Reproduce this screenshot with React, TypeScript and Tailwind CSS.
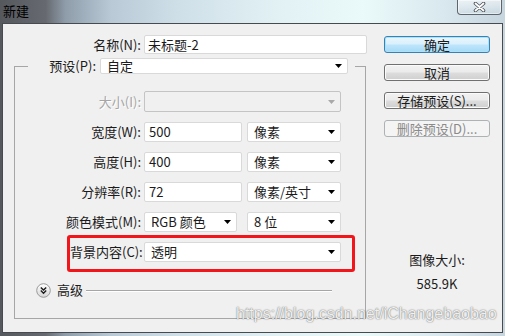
import React from 'react'

// Win7 风格「新建」对话框
function Arrow({ disabled }: { disabled?: boolean }) {
  return (
    <svg width="7" height="4" viewBox="0 0 7 4" className="flex-shrink-0">
      <path d="M0 0h7L3.5 4z" fill={disabled ? '#a8a8a8' : '#000'} />
    </svg>
  )
}

function Select({ value, className, disabled }: { value?: string; className: string; disabled?: boolean }) {
  return (
    <div
      className={`flex items-center justify-between rounded-[2px] border pl-[6px] pr-[5px] ${
        disabled ? 'border-[#c4c4c4] bg-[#f0f0f0]' : 'border-[#d9d9d9] bg-white'
      } ${className}`}
    >
      <span className="whitespace-nowrap">{value}</span>
      <Arrow disabled={disabled} />
    </div>
  )
}

function Input({ value, className }: { value: string; className: string }) {
  return (
    <div className={`flex items-center rounded-[2px] border border-[#d9d9d9] bg-white pl-[4px] ${className}`}>
      {value}
    </div>
  )
}

function Btn({ label, kind = 'normal' }: { label: string; kind?: 'normal' | 'default' | 'disabled' }) {
  const cls =
    kind === 'default'
      ? 'border-[#3c7fb1] bg-[linear-gradient(180deg,#eaf6fd_0%,#d9f0fc_48%,#bee6fd_52%,#a7d9f5_100%)] shadow-[inset_0_0_0_1px_#a6e4fb]'
      : kind === 'disabled'
      ? 'border-[#adb2b5] bg-[#f4f4f4] text-[#8a8a8a]'
      : 'border-[#707070] bg-[linear-gradient(180deg,#f2f2f2_0%,#ebebeb_48%,#dddddd_52%,#cfcfcf_100%)] shadow-[inset_0_0_0_1px_#fbfbfb]'
  return (
    <div className={`flex h-[17px] w-[106px] items-center justify-center rounded-[3px] border leading-[15px] ${cls}`}>
      {label}
    </div>
  )
}

function CloseButton() {
  return (
    <div className="mr-[3px] flex h-[15px] w-[45px] items-center justify-center rounded-b-[4px] border border-t-0 border-[#5f656d] bg-[linear-gradient(180deg,rgba(255,255,255,0.55)_0%,rgba(235,242,246,0.45)_50%,rgba(200,214,222,0.5)_100%)] shadow-[inset_0_0_0_1px_rgba(255,255,255,0.5)]">
      <svg width="13" height="10" viewBox="0 0 13 10">
        <path d="M2.5 1.5l8 7M10.5 1.5l-8 7" stroke="#50555c" strokeWidth="3.6" strokeLinecap="round" />
        <path d="M2.5 1.5l8 7M10.5 1.5l-8 7" stroke="#ffffff" strokeWidth="1.8" strokeLinecap="round" />
      </svg>
    </div>
  )
}

function AdvancedIcon() {
  return (
    <svg width="15" height="15" viewBox="0 0 15 15" className="flex-shrink-0">
      <defs>
        <linearGradient id="adv" x1="0" y1="0" x2="0" y2="1">
          <stop offset="0" stopColor="#ffffff" />
          <stop offset="1" stopColor="#d6d6d6" />
        </linearGradient>
      </defs>
      <circle cx="7.5" cy="7.5" r="6.8" fill="url(#adv)" stroke="#9a9a9a" />
      <path d="M4.8 4.4l2.7 2.6 2.7-2.6M4.8 7.6l2.7 2.6 2.7-2.6" fill="none" stroke="#1a1a1a" strokeWidth="1.4" />
    </svg>
  )
}

function Row({ label, children, dim }: { label: string; children: React.ReactNode; dim?: boolean }) {
  return (
    <div className="flex items-center">
      <span className={`w-[113px] whitespace-nowrap text-right ${dim ? 'text-[#a6a6a6] [text-shadow:1px_1px_0_#ffffff]' : ''}`}>
        {label}
      </span>
      <div className="ml-[3px] flex gap-[5px]">{children}</div>
    </div>
  )
}

export default function App() {
  return (
    <div className="relative h-[336px] w-[505px] overflow-hidden bg-[linear-gradient(90deg,#55585d_0%,#66696f_9%,#8f9dab_13%,#b9c9d6_22%,#cfdfe8_35%,#e2f1f4_55%,#eafafa_72%,#d9e8ee_88%,#c6d5de_100%)] font-['Noto_Sans_CJK_SC',sans-serif] text-[13px] leading-[16px] text-[#1b1b1b]">
      {/* 标题栏 */}
      <div className="flex h-[23px] items-start justify-between">
        <span className="pl-[3px] pt-[3px] text-black">新建</span>
        <CloseButton />
      </div>

      {/* 客户区 */}
      <div className="mx-[2px] flex h-[310px] border border-[#474a4f] bg-[#f0f0f0]">
        {/* 左栏 */}
        <div className="ml-[11px] mt-[11px] flex w-[353px] flex-col">
          <div className="flex h-[19px] items-center">
            <span className="w-[127px] text-right">名称(N):</span>
            <div className="ml-[3px] flex h-[19px] w-[223px] items-center rounded-[2px] border border-[#d9d9d9] bg-white pl-[3px]">
              未标题-2
            </div>
          </div>

          <fieldset className="mt-[4px] w-[352px] border border-[#a6a6a6] pb-[21px] pl-[13px]">
            <legend>
              <div className="flex h-[16px] items-center">
                <span className="w-[68px] text-right">预设(P):</span>
                <Select value="自定" className="ml-[4px] h-[16px] w-[248px]" />
                <span className="w-[7px]" />
              </div>
            </legend>

            <div className="mt-[17px] flex flex-col">
              <Row label="大小(I):" dim>
                <Select className="h-[21px] w-[197px]" disabled />
              </Row>
              <div className="mt-[10px]">
                <Row label="宽度(W):">
                  <Input value="500" className="h-[20px] w-[98px]" />
                  <Select value="像素" className="h-[20px] w-[94px]" />
                </Row>
              </div>
              <div className="mt-[10px]">
                <Row label="高度(H):">
                  <Input value="400" className="h-[20px] w-[98px]" />
                  <Select value="像素" className="h-[20px] w-[94px]" />
                </Row>
              </div>
              <div className="mt-[10px]">
                <Row label="分辨率(R):">
                  <Input value="72" className="h-[20px] w-[98px]" />
                  <Select value="像素/英寸" className="h-[20px] w-[94px]" />
                </Row>
              </div>
              <div className="mt-[10px]">
                <div className="flex items-center">
                  <span className="w-[113px] whitespace-nowrap text-right">颜色模式(M):</span>
                  <Select value="RGB 颜色" className="ml-[3px] h-[20px] w-[93px]" />
                  <Select value="8 位" className="ml-[10px] h-[20px] w-[94px]" />
                </div>
              </div>

              {/* 红框标注 */}
              <div className="ml-[39px] mt-[3px] flex w-[288px] items-center rounded-[3px] border-[3px] border-[#f2161b] pb-[7px] pr-[11px] pt-[4px]">
                <span className="w-[71px] whitespace-nowrap text-right">背景内容(C):</span>
                <Select value="透明" className="ml-[3px] h-[20px] w-[197px]" />
              </div>

              <div className="ml-[8px] mt-[11px] flex h-[14px] items-center">
                <AdvancedIcon />
                <span className="ml-[6px]">高级</span>
                <div className="ml-[3px] h-px w-[246px] bg-[#a6a6a6] shadow-[0_1px_0_#ffffff]" />
              </div>
            </div>
          </fieldset>
        </div>

        {/* 右栏 */}
        <div className="ml-[17px] mt-[12px] flex w-[106px] flex-col items-center">
          <Btn label="确定" kind="default" />
          <div className="mt-[11px]">
            <Btn label="取消" />
          </div>
          <div className="mt-[11px]">
            <Btn label="存储预设(S)..." />
          </div>
          <div className="mt-[11px]">
            <Btn label="删除预设(D)..." kind="disabled" />
          </div>
          <span className="mt-[115px]">图像大小:</span>
          <span className="mt-[8px]">585.9K</span>
        </div>
      </div>

      {/* 水印 */}
      <span className="pointer-events-none absolute left-[236px] top-[305px] whitespace-nowrap font-['Liberation_Sans',sans-serif] text-[16px] leading-[18px] text-white/90 [text-shadow:0_0_1px_rgba(0,0,0,0.55),0_0_2px_rgba(0,0,0,0.3)]">
        https://blog.csdn.net/iChangebaobao
      </span>
    </div>
  )
}
